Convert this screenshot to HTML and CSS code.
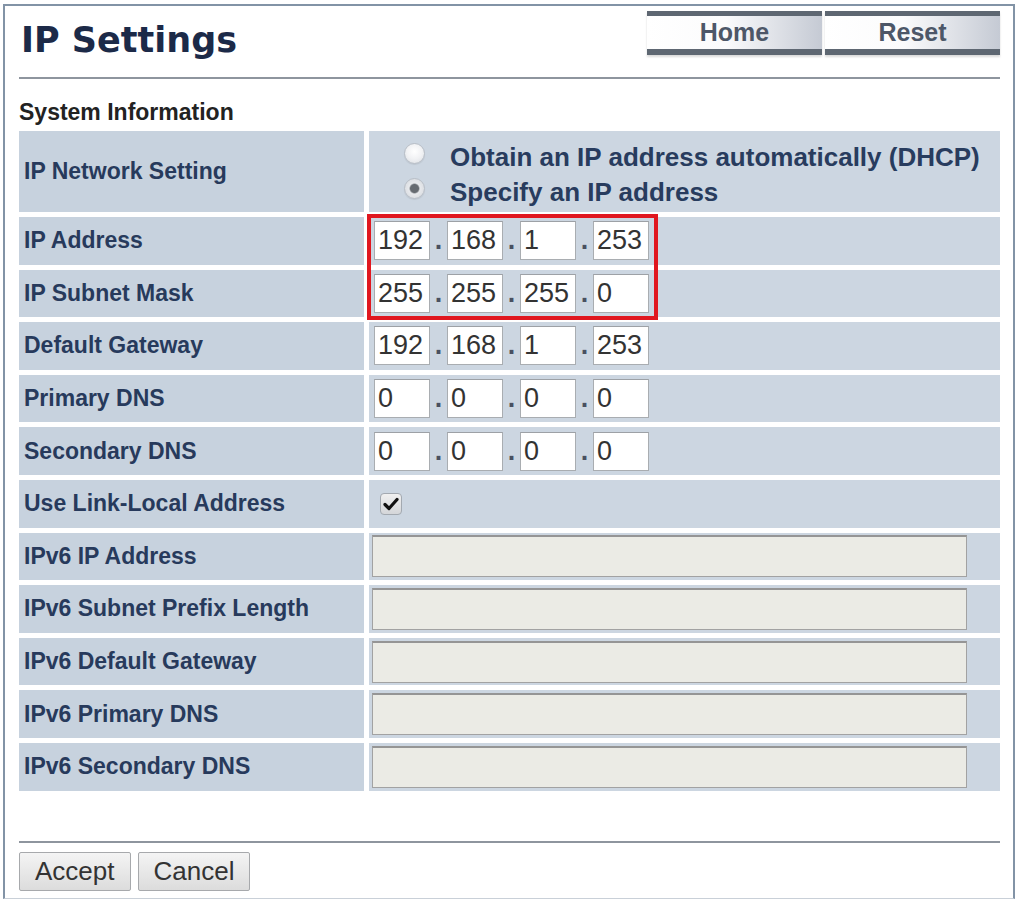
FILE: index.html
```html
<!DOCTYPE html>
<html lang="en">
<head>
    <meta charset="UTF-8">
    <meta name="viewport" content="width=device-width, initial-scale=1.0">
    <title>IP Settings</title>
    <link rel="stylesheet" href="styles.css">
</head>
<body>
    <div class="frame">
        <!-- Header -->
        <div class="header">
            <h1 class="title">IP Settings</h1>
            <div class="nav">
                <button class="nav-btn">Home</button>
                <button class="nav-btn">Reset</button>
            </div>
        </div>

        <h2 class="section">System Information</h2>

        <!-- Settings table -->
        <div class="form">
            <div class="label">IP Network Setting</div>
            <div class="value radios">
                <label class="radio-line"><input type="radio" name="mode" class="radio">Obtain an IP address automatically (DHCP)</label>
                <label class="radio-line"><input type="radio" name="mode" class="radio" checked>Specify an IP address</label>
            </div>

            <div class="label">IP Address</div>
            <div class="value">
                <input class="octet" value="192"><span class="dot">.</span><input class="octet" value="168"><span class="dot">.</span><input class="octet" value="1"><span class="dot">.</span><input class="octet" value="253">
            </div>

            <div class="label">IP Subnet Mask</div>
            <div class="value">
                <input class="octet" value="255"><span class="dot">.</span><input class="octet" value="255"><span class="dot">.</span><input class="octet" value="255"><span class="dot">.</span><input class="octet" value="0">
            </div>

            <div class="label">Default Gateway</div>
            <div class="value">
                <input class="octet" value="192"><span class="dot">.</span><input class="octet" value="168"><span class="dot">.</span><input class="octet" value="1"><span class="dot">.</span><input class="octet" value="253">
            </div>

            <div class="label">Primary DNS</div>
            <div class="value">
                <input class="octet" value="0"><span class="dot">.</span><input class="octet" value="0"><span class="dot">.</span><input class="octet" value="0"><span class="dot">.</span><input class="octet" value="0">
            </div>

            <div class="label">Secondary DNS</div>
            <div class="value">
                <input class="octet" value="0"><span class="dot">.</span><input class="octet" value="0"><span class="dot">.</span><input class="octet" value="0"><span class="dot">.</span><input class="octet" value="0">
            </div>

            <div class="label">Use Link-Local Address</div>
            <div class="value">
                <span class="check">
                    <svg width="16" height="14" viewBox="0 0 16 14"><path d="M2 7.5 L6 11.5 L14 2.5" fill="none" stroke="#111" stroke-width="3.2" stroke-linecap="round" stroke-linejoin="round"/></svg>
                </span>
            </div>

            <div class="label">IPv6 IP Address</div>
            <div class="value"><input class="wide" disabled></div>

            <div class="label">IPv6 Subnet Prefix Length</div>
            <div class="value"><input class="wide" disabled></div>

            <div class="label">IPv6 Default Gateway</div>
            <div class="value"><input class="wide" disabled></div>

            <div class="label">IPv6 Primary DNS</div>
            <div class="value"><input class="wide" disabled></div>

            <div class="label">IPv6 Secondary DNS</div>
            <div class="value"><input class="wide" disabled></div>

            <!-- Red marker around address and mask -->
            <div class="highlight"></div>
        </div>

        <!-- Footer -->
        <div class="footer">
            <button class="btn">Accept</button>
            <button class="btn">Cancel</button>
        </div>
    </div>
</body>
</html>
```

FILE: styles.css
```css
body {
    margin: 0;
    background: #fff;
    font-family: "Liberation Sans", Arial, sans-serif;
}

/* Outer frame */
.frame {
    box-sizing: border-box;
    width: 1012px;
    margin: 4px 0 0 3px;
    padding: 0 13px 7px 14px;
    border: 2px solid #8293a6;
    border-bottom: 1px solid #c9d0d8;
}

/* Header */
.header {
    display: flex;
    justify-content: space-between;
    align-items: flex-start;
    height: 71px;
    border-bottom: 2px solid #8e959e;
}

.title {
    margin: 14px 0 0 2px;
    font-family: "DejaVu Sans", Verdana, sans-serif;
    font-size: 35px;
    line-height: 41px;
    font-weight: bold;
    color: #1c2a48;
}

.nav {
    display: flex;
    gap: 3px;
    margin-top: 5px;
}

.nav-btn {
    box-sizing: border-box;
    width: 175px;
    height: 44px;
    padding: 0;
    border: none;
    border-top: 5px solid #5e6772;
    border-bottom: 6px solid #5e6772;
    background: linear-gradient(to right, #fff 0%, #fbfbfc 45%, #c5cad4 100%);
    box-shadow: 0 2px 2px rgba(0, 0, 0, 0.15);
    font-family: "Liberation Sans", Arial, sans-serif;
    font-size: 25px;
    line-height: 33px;
    font-weight: bold;
    color: #4d5768;
    cursor: pointer;
}

.section {
    margin: 20px 0 6px;
    font-size: 23px;
    line-height: 26px;
    font-weight: bold;
    color: #222;
}

/* Settings grid */
.form {
    position: relative;
    display: grid;
    grid-template-columns: 345px 1fr;
    grid-template-rows: 81px;
    grid-auto-rows: 47.6px;
    gap: 5px;
}

.label {
    display: flex;
    align-items: center;
    padding-left: 5px;
    background: #c7d2de;
    font-size: 23px;
    font-weight: bold;
    color: #273a5c;
}

.value {
    display: flex;
    align-items: center;
    padding-left: 5px;
    background: #ccd6e1;
}

.radios {
    flex-direction: column;
    align-items: flex-start;
    padding: 9px 0 0 35px;
}

.radio-line {
    display: flex;
    align-items: center;
    height: 35px;
    font-size: 26px;
    font-weight: bold;
    color: #283c5e;
}

.radio {
    appearance: none;
    box-sizing: border-box;
    width: 21px;
    height: 21px;
    margin: 0 25px 8px 0;
    border: 1px solid #b8bec6;
    border-radius: 50%;
    background: radial-gradient(circle at 50% 40%, #fff 0%, #f1f2f4 50%, #d9dde2 100%);
    box-shadow: 0 1px 1px rgba(0, 0, 0, 0.08);
}

.radio:checked {
    background: radial-gradient(circle, #666b71 0, #666b71 4px, #e7e9ec 5.5px, #d3d7dc 100%);
}

.octet {
    box-sizing: border-box;
    width: 56px;
    height: 39px;
    margin: 0;
    padding: 0 0 0 3px;
    border: 1px solid #a9adb1;
    border-top-color: #9da1a6;
    background: #fff;
    font-family: "Liberation Sans", Arial, sans-serif;
    font-size: 27px;
    color: #333;
}

.dot {
    width: 17px;
    height: 39px;
    text-align: center;
    font-size: 27px;
    font-weight: bold;
    line-height: 39px;
    color: #4a5060;
}

.check {
    box-sizing: border-box;
    display: flex;
    align-items: center;
    justify-content: center;
    width: 22px;
    height: 22px;
    margin-left: 6px;
    border: 1px solid #a3a9b0;
    border-radius: 4px;
    background: linear-gradient(to bottom, #f0f0f0, #d4d6d9);
}

.wide {
    box-sizing: border-box;
    width: 595px;
    height: 42px;
    margin: 0 0 0 -2px;
    border: 1px solid #a2a2a2;
    border-top: 2px solid #959595;
    background: #ebebe5;
}

.highlight {
    position: absolute;
    left: 348px;
    top: 83px;
    width: 291px;
    height: 106px;
    box-sizing: border-box;
    border: 4px solid #e0171f;
    pointer-events: none;
}

/* Footer */
.footer {
    display: flex;
    gap: 7px;
    margin-top: 50px;
    padding-top: 9px;
    border-top: 2px solid #8e959e;
}

.btn {
    height: 39px;
    padding: 0 15px;
    border: 1px solid #a7a9ac;
    border-radius: 2px;
    background: linear-gradient(to bottom, #f4f4f4, #dcdcdc);
    font-family: "Liberation Sans", Arial, sans-serif;
    font-size: 26px;
    color: #333;
    cursor: pointer;
}
```
